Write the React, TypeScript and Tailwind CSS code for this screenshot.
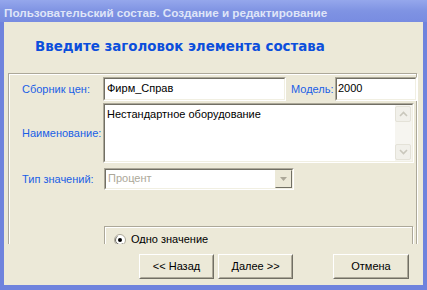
import React from "react";

const sunken =
  "border border-t-[#aca899] border-l-[#aca899] border-r-white border-b-white";
const sunkenInner =
  "border border-t-[#716f64] border-l-[#716f64] border-r-[#f1efe2] border-b-[#f1efe2]";

function Field({ w, h, children, className = "" }: { w: number; h: number; children?: React.ReactNode; className?: string }) {
  return (
    <div className={`${sunken} shrink-0 ${className}`} style={{ width: w, height: h }}>
      <div className={`${sunkenInner} w-full h-full bg-white relative`}>{children}</div>
    </div>
  );
}

function Chevron({ up }: { up?: boolean }) {
  return (
    <svg width="9" height="6" viewBox="0 0 9 6">
      <path
        d={up ? "M1 5 L4.5 1.5 L8 5" : "M1 1 L4.5 4.5 L8 1"}
        fill="none"
        stroke="#c9c7bc"
        strokeWidth="1.6"
      />
    </svg>
  );
}

function Btn({ label, w }: { label: string; w: number }) {
  return (
    <div
      className="shrink-0 h-[25px] border border-t-white border-l-white border-r-[#716f64] border-b-[#716f64]"
      style={{ width: w }}
    >
      <div className="w-full h-full border border-t-[#ece9d8] border-l-[#ece9d8] border-r-[#aca899] border-b-[#aca899] flex items-center justify-center text-[11px] text-black">
        {label}
      </div>
    </div>
  );
}

export default function App() {
  return (
    <div className="w-[427px] h-[290px] bg-[#6f83dd] flex flex-col font-['Liberation_Sans',sans-serif] overflow-hidden">
      {/* title bar */}
      <div className="h-[22px] shrink-0 bg-gradient-to-b from-[#95a7ec] via-[#7f93e3] to-[#788ce1] flex items-center pl-[4px] pt-[3px]">
        <span className="text-[11.7px] leading-[13px] text-[#dfe5f8] font-bold whitespace-nowrap">
          Пользовательский состав. Создание и редактирование
        </span>
      </div>
      {/* body */}
      <div className="ml-[4px] mr-[4px] mb-[5px] flex-1 bg-[#ece9d8] flex flex-col">
        <div className="h-[51px] shrink-0 pl-[31px] pt-[12px]">
          <span className="font-['DejaVu_Sans',sans-serif] text-[13.4px] leading-[16px] font-bold text-[#0c4fdc] whitespace-nowrap">
            Введите заголовок элемента состава
          </span>
        </div>
        {/* group clip */}
        <div className="ml-[4px] w-[410px] h-[171px] overflow-hidden shrink-0">
          <div className="w-[409px] h-[220px] border border-[#aca899] shadow-[inset_1px_1px_0_white,1px_1px_0_white] pt-[3px] pl-[13px] flex flex-col">
            {/* row 1 */}
            <div className="flex items-center h-[24px]">
              <div className="w-[81px] shrink-0 text-[11px] text-[#1a5fe6] whitespace-nowrap">Сборник цен:</div>
              <Field w={183} h={24}>
                <div className="pl-[2px] pt-[3px] text-[11px] leading-[13px] text-black whitespace-nowrap">Фирм_Справ</div>
              </Field>
              <div className="w-[44px] ml-[5px] shrink-0 text-[11px] text-[#1a5fe6] whitespace-nowrap">Модель:</div>
              <Field w={82} h={24}>
                <div className="pl-[1px] pt-[3px] text-[11px] leading-[13px] text-black whitespace-nowrap">2000</div>
              </Field>
            </div>
            {/* row 2 */}
            <div className="flex items-center h-[60px] mt-[2px]">
              <div className="w-[81px] shrink-0 text-[11px] text-[#1a5fe6] whitespace-nowrap">Наименование:</div>
              <Field w={311} h={60}>
                <div className="flex h-full">
                  <div className="flex-1 pl-[2px] pt-[3px] text-[11px] leading-[13px] text-black whitespace-nowrap">
                    Нестандартное оборудование
                  </div>
                  <div className="w-[17px] h-full bg-[#f6f5f0] flex flex-col justify-between py-[1px] pr-[1px]">
                    <div className="h-[16px] rounded-[2px] border border-[#e4e2d8] bg-[#f1f0ea] flex items-center justify-center">
                      <Chevron up />
                    </div>
                    <div className="h-[16px] rounded-[2px] border border-[#e4e2d8] bg-[#f1f0ea] flex items-center justify-center">
                      <Chevron />
                    </div>
                  </div>
                </div>
              </Field>
            </div>
            {/* row 3 */}
            <div className="flex items-center h-[22px] mt-[5px]">
              <div className="w-[82px] shrink-0 text-[11px] text-[#1a5fe6] whitespace-nowrap">Тип значений:</div>
              <Field w={190} h={22}>
                <div className="flex h-full">
                  <div className="flex-1 pl-[2px] pt-[2px] text-[11px] leading-[13px] text-[#aca899] whitespace-nowrap">Процент</div>
                  <div className="w-[17px] h-full border border-t-[#ece9d8] border-l-[#ece9d8] border-r-[#716f64] border-b-[#716f64] bg-[#ece9d8] flex items-center justify-center">
                    <svg width="7" height="4" viewBox="0 0 7 4">
                      <path d="M0 0 H7 L3.5 4 Z" fill="#aca899" />
                    </svg>
                  </div>
                </div>
              </Field>
            </div>
            {/* radio group */}
            <div className="ml-[82px] mt-[36px] w-[309px] h-[40px] border border-[#aca899] shadow-[inset_1px_1px_0_white,1px_1px_0_white] pl-[9px] pt-[6px] flex self-start">
              <div className="flex items-center self-start">
                <svg width="12" height="12" viewBox="0 0 12 12">
                  <circle cx="6" cy="6" r="5.5" fill="white" stroke="#aca899" />
                  <circle cx="6" cy="6" r="4.5" fill="none" stroke="#716f64" strokeDasharray="14 14" strokeDashoffset="-4" />
                  <circle cx="6" cy="6" r="2" fill="black" />
                </svg>
                <span className="ml-[5px] text-[11px] leading-[13px] text-black whitespace-nowrap">Одно значение</span>
              </div>
            </div>
          </div>
        </div>
        {/* buttons */}
        <div className="flex mt-[10px] pl-[135px]">
          <Btn label="<< Назад" w={75} />
          <div className="w-[4px]" />
          <Btn label="Далее >>" w={75} />
          <div className="w-[40px]" />
          <Btn label="Отмена" w={76} />
        </div>
      </div>
    </div>
  );
}
